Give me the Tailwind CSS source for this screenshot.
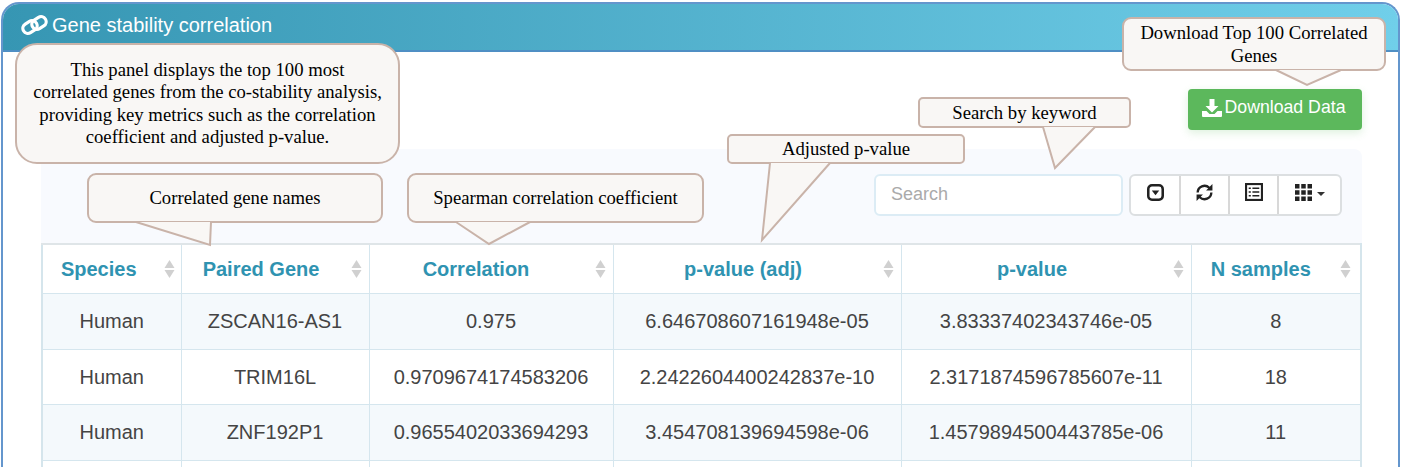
<!DOCTYPE html>
<html lang="en">
<head>
  <meta charset="UTF-8" />
  <title>Gene stability correlation</title>
  <script src="https://cdn.jsdelivr.net/npm/@tailwindcss/browser@4"></script>
</head>
<body class="bg-white h-[467px] overflow-hidden relative font-['Liberation_Sans',Arial,sans-serif]">

  <!-- panel -->
  <div class="ml-px mr-[2px] mt-[2px] h-[470px] border-2 border-b-0 border-[#6496cd] rounded-t-[18px] overflow-hidden bg-white">
    <div class="h-[48px] border-b-2 border-[#4f8fc4] bg-gradient-to-r from-[#3696b3] to-[#70cfea] flex items-center pl-[18px] gap-[4px] text-white text-[20px] pb-[4px]">
      <svg width="27" height="22" viewBox="0 0 27 22" fill="none" stroke="white" stroke-width="3.2">
        <rect x="1.5" y="8" width="15" height="10" rx="5" transform="rotate(-32 9 13)" />
        <rect x="10.5" y="4" width="15" height="10" rx="5" transform="rotate(-32 18 9)" />
      </svg>
      <span>Gene stability correlation</span>
    </div>

    <div class="pl-[38px] pr-[36px]">
      <div class="flex justify-end pt-[37px]">
        <button class="w-[174px] h-[41px] bg-[#5cb85c] rounded-[4px] text-white text-[17.7px] flex items-center justify-center gap-[3px] pr-[3px] pb-[4px] shadow-[0_3px_8px_rgba(92,184,92,0.2)]">
          <svg width="20" height="18" viewBox="0 0 20 18" fill="white">
            <path d="M7.5 0h5v7h4l-6.500 6.500L3.500 7h4z" />
            <path d="M0 12h4.500l3 3h5l3-3H20v5a1 1 0 0 1-1 1H1a1 1 0 0 1-1-1z" />
          </svg>
          Download Data
        </button>
      </div>

      <div class="mt-[19px] bg-[#f8fafe] rounded-t-[8px] pr-px pt-[25px]">
        <div class="flex justify-end gap-[6px] pr-[19px]">
          <input placeholder="Search" class="w-[249px] h-[42px] bg-white border-2 border-[#dcecf5] rounded-[6px] px-[15px] pb-[2px] text-[18px] placeholder:text-[#aaaaaa]" />
          <div class="flex h-[42px] bg-white border-2 border-[#dcdfe1] rounded-[6px] divide-x-2 divide-[#d8d8d8]">
            <div class="w-[50px] flex items-center justify-center pb-[6px]">
              <svg width="17" height="17" viewBox="0 0 16 16">
                <rect x="1.200" y="1.200" width="13.600" height="13.600" rx="3.500" fill="none" stroke="#222" stroke-width="2.400" />
                <path d="M4.500 6h7L8 10.500z" fill="#222" />
              </svg>
            </div>
            <div class="w-[49px] flex items-center justify-center pb-[6px]">
              <svg width="19" height="19" viewBox="0 0 18 18" fill="none" stroke="#222" stroke-width="2.200">
                <path d="M2.500 9a6.500 6.500 0 0 1 11-4.500l1.500 1.500" />
                <path d="M15.500 9a6.500 6.500 0 0 1-11 4.500L3 12" />
                <path d="M16.500 1v6h-6z" fill="#222" stroke="none" />
                <path d="M1.500 17v-6h6z" fill="#222" stroke="none" />
              </svg>
            </div>
            <div class="w-[49px] flex items-center justify-center pb-[6px]">
              <svg width="18" height="18" viewBox="0 0 17 17" fill="none" stroke="#222">
                <rect x="1" y="1" width="15" height="15" stroke-width="2" />
                <path d="M3.500 5h2M7 5h6.500M3.500 8.500h2M7 8.500h6.500M3.500 12h2M7 12h6.500" stroke-width="1.500" />
              </svg>
            </div>
            <div class="w-[61px] flex items-center justify-center gap-[5px] pb-[6px]">
              <svg width="17" height="17" viewBox="0 0 17 17" fill="#222">
                <path d="M0 0h4.500v4.500H0zM6.250 0h4.500v4.500h-4.500zM12.500 0H17v4.500h-4.500zM0 6.250h4.500v4.500H0zM6.250 6.250h4.500v4.500h-4.500zM12.500 6.250H17v4.500h-4.500zM0 12.500h4.500V17H0zM6.250 12.500h4.500V17h-4.500zM12.500 12.500H17V17h-4.500z" />
              </svg>
              <div class="w-0 h-0 mt-[4px] border-x-[4px] border-x-transparent border-t-[4px] border-t-[#333]"></div>
            </div>
          </div>
        </div>

        <table class="mt-[27px] w-[1319px] table-fixed border-collapse bg-white text-[20px] text-[#444] text-center rounded-t-[6px]">
          <colgroup>
            <col class="w-[139px]" /><col class="w-[188px]" /><col class="w-[244px]" /><col class="w-[288px]" /><col class="w-[290px]" /><col class="w-[170px]" />
          </colgroup>
          <thead class="text-[#2f93b1] font-bold">
            <tr class="h-[49px] border-2 border-b border-[#d5e5ec] border-t-[#dfe5e8]">
              <th class="relative pr-[26px] border-r border-[#d5e6ee]">Species<svg class="absolute right-[6px] top-[15px]" width="11" height="18" viewBox="0 0 11 18" fill="#d0d0d0"><path d="M5.500 0l5 8H.5zM5.500 18l5-8H.5z" /></svg></th>
              <th class="relative pr-7 border-r border-[#d5e6ee]">Paired Gene<svg class="absolute right-[7px] top-[15px]" width="11" height="18" viewBox="0 0 11 18" fill="#d0d0d0"><path d="M5.500 0l5 8H.5zM5.500 18l5-8H.5z" /></svg></th>
              <th class="relative pr-[30px] border-r border-[#d5e6ee]">Correlation<svg class="absolute right-[7px] top-[15px]" width="11" height="18" viewBox="0 0 11 18" fill="#d0d0d0"><path d="M5.500 0l5 8H.5zM5.500 18l5-8H.5z" /></svg></th>
              <th class="relative pr-7 border-r border-[#d5e6ee]">p-value (adj)<svg class="absolute right-[7px] top-[15px]" width="11" height="18" viewBox="0 0 11 18" fill="#d0d0d0"><path d="M5.500 0l5 8H.5zM5.500 18l5-8H.5z" /></svg></th>
              <th class="relative pr-7 border-r border-[#d5e6ee]">p-value<svg class="absolute right-[7px] top-[15px]" width="11" height="18" viewBox="0 0 11 18" fill="#d0d0d0"><path d="M5.500 0l5 8H.5zM5.500 18l5-8H.5z" /></svg></th>
              <th class="relative pr-[30px]">N samples<svg class="absolute right-[9px] top-[15px]" width="11" height="18" viewBox="0 0 11 18" fill="#d0d0d0"><path d="M5.500 0l5 8H.5zM5.500 18l5-8H.5z" /></svg></th>
            </tr>
          </thead>
          <tbody class="[&_td]:border [&_td]:border-[#d5e6ee] [&_tr]:border-x-2 [&_tr]:border-[#d5e5ec]">
            <tr class="h-[56px] bg-[#f4f9fc]">
              <td>Human</td><td>ZSCAN16-AS1</td><td>0.975</td><td>6.646708607161948e-05</td><td>3.83337402343746e-05</td><td>8</td>
            </tr>
            <tr class="h-[55px]">
              <td>Human</td><td>TRIM16L</td><td>0.9709674174583206</td><td>2.2422604400242837e-10</td><td>2.3171874596785607e-11</td><td>18</td>
            </tr>
            <tr class="h-[56px] bg-[#f4f9fc]">
              <td>Human</td><td>ZNF192P1</td><td>0.9655402033694293</td><td>3.454708139694598e-06</td><td>1.4579894500443785e-06</td><td>11</td>
            </tr>
            <tr class="h-[56px]">
              <td></td><td></td><td></td><td></td><td></td><td></td>
            </tr>
          </tbody>
        </table>
      </div>
    </div>
  </div>

  <!-- callouts lying over the page -->
  <div class="absolute left-[15px] top-[43px] w-[385px] h-[121px] bg-[#f9f7f5] border-2 border-[#c9b3a9] rounded-[22px] flex items-center justify-center text-center font-['Liberation_Serif',serif] text-[18.7px] leading-[22.400px] text-black">
    This panel displays the top 100 most<br />correlated genes from the co-stability analysis,<br />providing key metrics such as the correlation<br />coefficient and adjusted p-value.
  </div>
  <div class="absolute left-[1122px] top-[17px] w-[264px] h-[54px] bg-[#f9f7f5] border-2 border-[#c9b3a9] rounded-[9px] flex items-center justify-center text-center font-['Liberation_Serif',serif] text-[18.7px] leading-[23px] text-black">
    Download Top 100 Correlated<br />Genes
  </div>
  <div class="absolute left-[918px] top-[97px] w-[213px] h-[31px] bg-[#f9f7f5] border-2 border-[#c9b3a9] rounded-[5px] flex items-center justify-center pt-[2px] font-['Liberation_Serif',serif] text-[18.7px] text-black">Search by keyword</div>
  <div class="absolute left-[727px] top-[134px] w-[238px] h-[30px] bg-[#f9f7f5] border-2 border-[#c9b3a9] rounded-[5px] flex items-center justify-center pt-px font-['Liberation_Serif',serif] text-[18.7px] text-black">Adjusted p-value</div>
  <div class="absolute left-[87px] top-[173px] w-[296px] h-[50px] bg-[#f9f7f5] border-2 border-[#c9b3a9] rounded-[9px] flex items-center justify-center font-['Liberation_Serif',serif] text-[18.7px] text-black">Correlated gene names</div>
  <div class="absolute left-[407px] top-[173px] w-[297px] h-[50px] bg-[#f9f7f5] border-2 border-[#c9b3a9] rounded-[9px] flex items-center justify-center font-['Liberation_Serif',serif] text-[18.7px] text-black">Spearman correlation coefficient</div>

  <!-- callout tails -->
  <svg class="absolute left-0 top-0" width="1402" height="467" fill="#f9f7f5" stroke="#c9b3a9" stroke-width="2">
    <polyline points="1276,70 1307,85 1341,70" />
    <polyline points="1043,127 1055,168 1095,127" />
    <polyline points="770,163 762,240 830,163" />
    <polyline points="136,222 210,245 211,222" />
    <polyline points="456,222 489,244 530,222" />
  </svg>

</body>
</html>
